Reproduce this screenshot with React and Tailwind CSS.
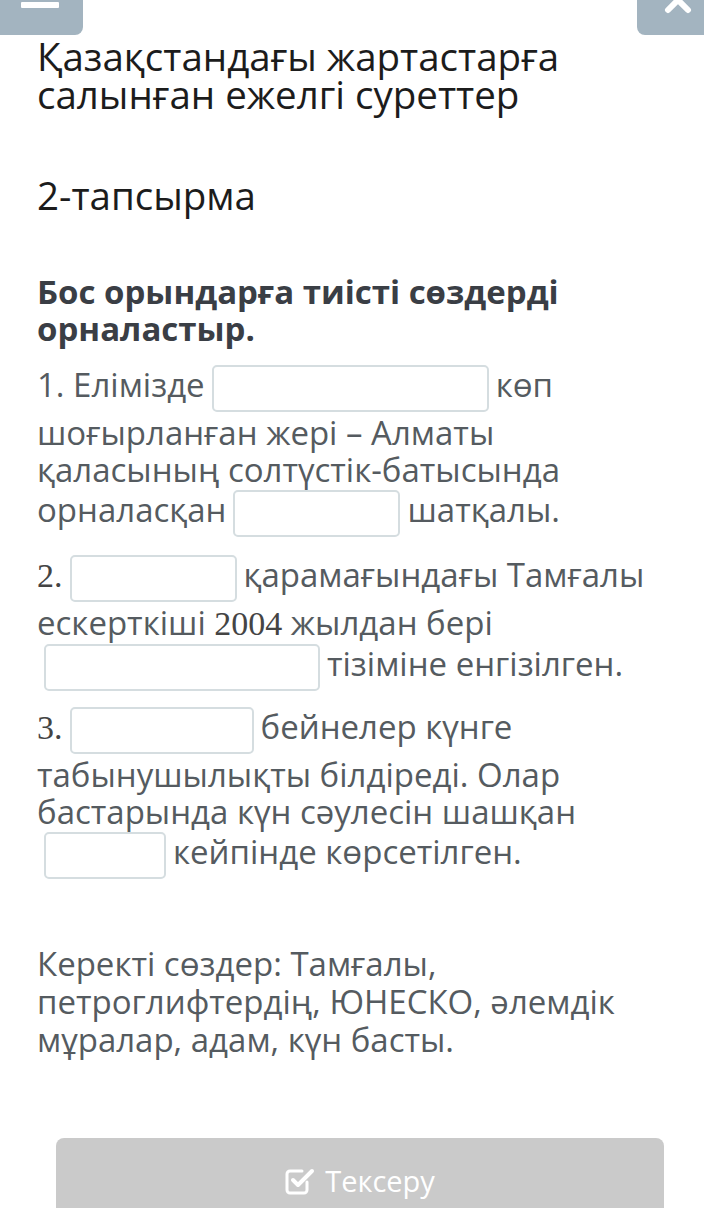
import React from 'react';

const Blank = ({ w }) => (
  <span
    className={`mx-[7px] my-[2px] inline-block h-[47px] rounded-[5px] border-2 border-[#d5dde0] bg-white align-middle ${w}`}
  />
);

const Num = ({ children }) => (
  <span className="font-['Liberation_Serif',serif] text-[34px] text-[#444]">{children}</span>
);

export default function App() {
  return (
    <div className="relative min-h-[1208px] w-[704px] overflow-hidden bg-white font-['Open_Sans',sans-serif]">
      <div className="flex items-start justify-between">
        <button className="flex h-[35px] w-[83px] justify-center rounded-br-[8px] bg-[#a3b4c0] pt-[2px]">
          <span className="ml-[-4px] h-[6px] w-[38px] rounded-[1px] bg-white" />
        </button>
        <button className="flex h-[35px] w-[67px] justify-center rounded-bl-[8px] bg-[#a3b4c0]">
          <svg width="30" height="16" viewBox="0 0 30 16" className="ml-[14px]">
            <path d="M5 -10 L25 10 M25 -10 L5 10" stroke="white" strokeWidth="6" fill="none" strokeLinecap="round" />
          </svg>
        </button>
      </div>

      <div className="pl-[37px] pr-[30px]">
        <h1 className="mt-[2px] text-[38.5px] leading-[38px] text-[#1c1c1c]">
          Қазақстандағы жартастарға салынған ежелгі суреттер
        </h1>

        <h2 className="mt-[60px] text-[38.5px] leading-[44px] text-[#1c1c1c]">2-тапсырма</h2>

        <p className="mt-[56px] text-[33px] font-bold leading-[37px] text-[#3a3e45]">
          Бос орындарға тиісті сөздерді орналастыр.
        </p>

        <div className="mt-[16px] text-[33px] leading-[37px] text-[#555b60]">
          <p>
            1. Елімізде
            <Blank w="w-[277px]" />
            көп шоғырланған жері – Алматы қаласының солтүстік-батысында орналасқан
            <Blank w="w-[167px]" />
            шатқалы.
          </p>
          <p className="mt-[14px]">
            <Num>2.</Num>
            <Blank w="w-[167px]" />
            қарамағындағы Тамғалы ескерткіші <Num>2004</Num> жылдан бері
            <Blank w="w-[276px]" />
            тізіміне енгізілген.
          </p>
          <p className="mt-[12px]">
            <Num>3.</Num>
            <Blank w="w-[184px]" />
            бейнелер күнге табынушылықты білдіреді. Олар бастарында күн сәулесін шашқан
            <Blank w="w-[122px]" />
            кейпінде көрсетілген.
          </p>
        </div>

        <p className="mt-[64px] text-[33px] leading-[38px] text-[#555b60]">
          Керекті сөздер: Тамғалы, петроглифтердің, ЮНЕСКО, әлемдік мұралар, адам, күн басты.
        </p>
      </div>

      <div className="absolute bottom-0 left-[56px] flex h-[70px] w-[608px] items-center justify-center gap-[10px] rounded-t-[8px] bg-[#cacaca] pt-[16px]">
        <svg width="30" height="28" viewBox="0 0 30 28" fill="none" stroke="white" strokeWidth="3" strokeLinecap="round" strokeLinejoin="round">
          <path d="M22 15 V23 a3 3 0 0 1 -3 3 H5 a3 3 0 0 1 -3 -3 V7 a3 3 0 0 1 3 -3 H17" />
          <path d="M8 13 L13 18 L27 4" strokeWidth="4" />
        </svg>
        <span className="text-[29px] text-white">Тексеру</span>
      </div>
    </div>
  );
}
